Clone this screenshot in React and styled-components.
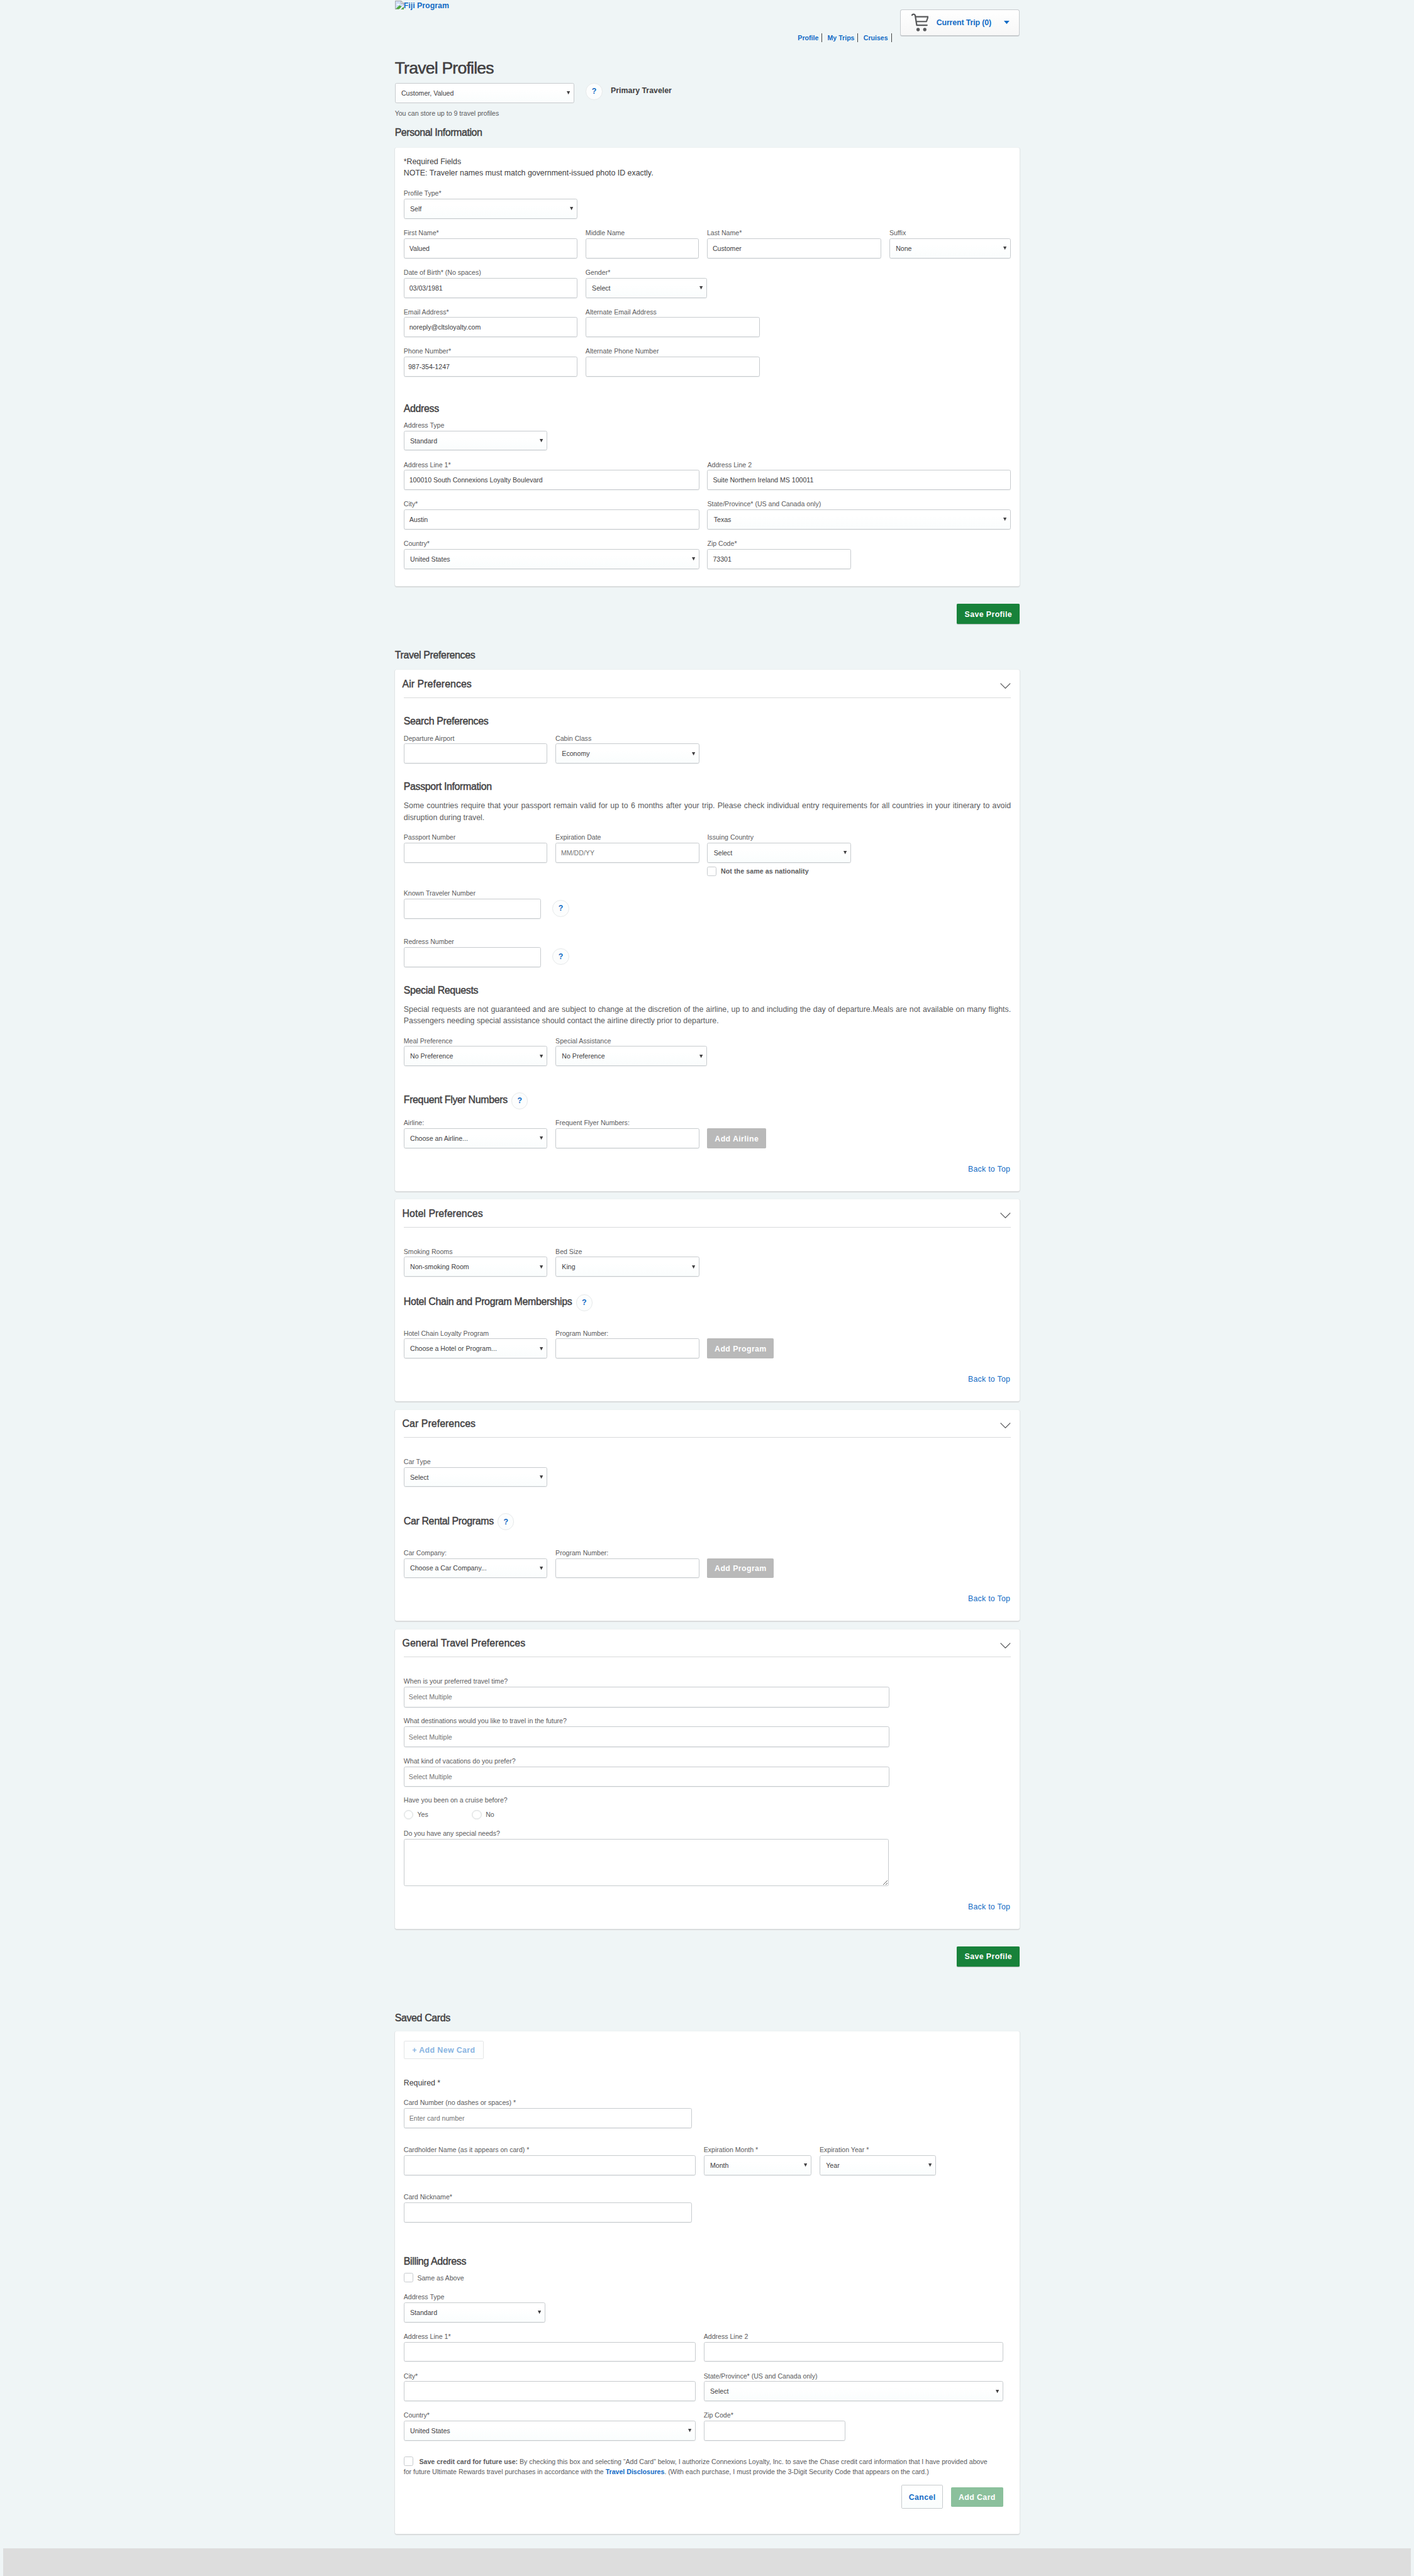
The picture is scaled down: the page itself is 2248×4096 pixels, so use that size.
import React from "react";
import styled, { createGlobalStyle } from "styled-components";

const SCALE = 0.884;
const LINK = "#126bc5";
const DARK = "#414042";
const MUTED = "#5b5b5d";
const BORDER = "#c7cbce";

const GlobalStyle = createGlobalStyle`
  html, body { margin: 0; padding: 0; background: #eff5f6; overflow-x: hidden; }
  *, *::before, *::after { box-sizing: border-box; }
  body, input, textarea, button { font-family: "Liberation Sans", Arial, sans-serif; }
`;

const Page = styled.div`
  zoom: ${SCALE};
  width: 2543px;
  height: 4634px;
  overflow: hidden;
  display: flex;
  flex-direction: column;
  align-items: center;
  background: #eff5f6;
  color: ${DARK};
  font-size: 12px;
`;

const Column = styled.main`
  width: 1124px;
  margin-left: 1px;
  padding-top: 0.6px;
  display: flex;
  flex-direction: column;
  align-items: stretch;
`;

/* ---------- header ---------- */

const Header = styled.header`
  height: 105px;
  display: flex;
  justify-content: space-between;
`;

const Logo = styled.a`
  display: flex;
  align-items: flex-start;
  height: 20px;
  color: ${LINK};
  font-size: 14px;
  font-weight: bold;
  line-height: 20px;
  white-space: nowrap;
`;

const HeaderRight = styled.div`
  display: flex;
  align-items: flex-start;
`;

const Nav = styled.nav`
  display: flex;
  margin-top: 59px;
  margin-right: 15.5px;
`;

const NavLink = styled.a`
  height: 16px;
  padding-right: 5.5px;
  margin-left: 9.5px;
  border-right: 1px solid #444;
  color: ${LINK};
  font-size: 12px;
  font-weight: bold;
  line-height: 16px;
  white-space: nowrap;
`;

const Cart = styled.div`
  width: 215px;
  height: 49.5px;
  margin-top: 16px;
  padding: 0 17px 0 19px;
  display: flex;
  align-items: center;
  border: 1px solid ${BORDER};
  border-bottom-width: 3px;
  border-right-width: 2px;
  border-radius: 4px;
  background: linear-gradient(#fff, #f7f7f7);
  color: ${LINK};
  font-size: 14px;
  font-weight: bold;
  letter-spacing: -0.15px;
  white-space: nowrap;
`;

const CartLabel = styled.span`
  flex: 1;
  margin-left: 14px;
`;

/* ---------- text ---------- */

const Title = styled.h1`
  margin: 0;
  font-size: 30px;
  font-weight: normal;
  line-height: 36px;
  letter-spacing: -0.85px;
  -webkit-text-stroke: 0.6px ${DARK};
`;

const Heading = styled.h2`
  margin: ${(p) => p.$mt || 0}px 0 0;
  font-size: 18px;
  font-weight: normal;
  line-height: 24px;
  letter-spacing: ${(p) => p.$ls ?? -0.38}px;
  -webkit-text-stroke: 0.5px ${DARK};
  white-space: nowrap;
`;

const Hint = styled.p`
  margin: 10.4px 0 0;
  color: ${MUTED};
  line-height: 16px;
`;

const Note = styled.p`
  margin: ${(p) => p.$mt || 0}px 0 0;
  font-size: 14px;
  line-height: 20px;
`;

const Paragraph = styled.p`
  margin: ${(p) => p.$mt}px 0 0;
  color: ${MUTED};
  font-size: 14px;
  line-height: 21px;
`;

const Line = styled.span`
  display: block;
  white-space: nowrap;
  text-align: ${(p) => (p.$fill ? "justify" : "left")};
  text-align-last: ${(p) => (p.$fill ? "justify" : "left")};
`;

const Strong = styled.strong`
  margin-left: 15px;
  font-size: 14px;
  line-height: 20px;
  margin-bottom: 6px;
`;

const BackLink = styled.a`
  display: block;
  margin-top: ${(p) => p.$mt}px;
  padding-top: 1px;
  padding-right: 1px;
  color: ${LINK};
  font-size: 14px;
  line-height: 20px;
  letter-spacing: 0.3px;
  text-align: right;
`;

/* ---------- panels ---------- */

const Card = styled.section`
  height: ${(p) => p.$h}px;
  margin-top: ${(p) => p.$mt}px;
  padding: ${(p) => p.$pt || 0}px 16px 0;
  border-radius: 3px;
  background: #fff;
  box-shadow: 0 2px 1px #d9dcdd, -1px 1px 1px #e1e5e6, 1px 1px 1px #e1e5e6;
`;

const CardHead = styled.div`
  height: 50px;
  padding-top: 12.5px;
  display: flex;
  justify-content: space-between;
  align-items: flex-start;
  border-bottom: 1px solid #d8dadb;
`;

const CardTitle = styled(Heading)`
  margin-left: -2.5px;
`;

const Row = styled.div`
  display: flex;
  align-items: ${(p) => p.$align || "flex-start"};
  justify-content: ${(p) => (p.$end ? "flex-end" : "flex-start")};
  gap: ${(p) => p.$gap ?? 14.5}px;
  margin-top: ${(p) => p.$mt ?? 16}px;
`;

/* ---------- form parts ---------- */

const FieldWrap = styled.div`
  width: ${(p) => p.$w}px;
  flex: none;
`;

const Label = styled.label`
  display: block;
  margin-top: ${(p) => p.$mt || 0}px;
  color: ${MUTED};
  font-size: 12px;
  line-height: 19px;
  white-space: nowrap;
`;

const Input = styled.input`
  display: block;
  width: 100%;
  height: ${(p) => p.$h || 36}px;
  margin: 0;
  padding: 0 ${(p) => p.$pad || 9}px;
  border: 1px solid ${BORDER};
  border-radius: 3px;
  background: #fff;
  box-shadow: 0 1px 0 #f0f2f3;
  color: ${DARK};
  font-size: 12px;
  outline: none;
  &::placeholder { color: #757575; opacity: 1; }
`;

const SelectBox = styled.div`
  width: ${(p) => (p.$w ? p.$w + "px" : "100%")};
  height: 36px;
  padding: 0 6.5px 0 10.5px;
  display: flex;
  align-items: center;
  justify-content: space-between;
  border: 1px solid ${BORDER};
  border-radius: 3px;
  background: linear-gradient(#fff 30%, #fafdfd);
  box-shadow: 0 1px 0 #f0f2f3;
  color: ${DARK};
  font-size: 12px;
  white-space: nowrap;
`;

const TextArea = styled.textarea`
  display: block;
  width: 873px;
  height: 85px;
  margin: 0;
  border: 1px solid ${BORDER};
  border-radius: 3px;
  background: #fff;
  resize: both;
  outline: none;
`;

const Help = styled.span`
  width: 30px;
  height: 30px;
  flex: none;
  margin-bottom: ${(p) => p.$mb || 0}px;
  display: flex;
  align-items: center;
  justify-content: center;
  border: 1px solid #e6e9ea;
  border-radius: 50%;
  background: #fcfdfd;
  color: ${LINK};
  font-size: 14px;
  font-weight: bold;
`;

const Check = styled.span`
  display: inline-block;
  flex: none;
  width: 17px;
  height: 17px;
  border: 1px solid ${BORDER};
  border-radius: ${(p) => (p.$round ? "50%" : "3px")};
  background: #fff;
  ${(p) => p.$round && "border-color: #dcdfe0; box-shadow: inset 0 0 0 1px #eef0f0;"}
`;

const CheckRow = styled.div`
  display: flex;
  align-items: center;
  gap: 7.5px;
  margin: ${(p) => p.$mt}px 0 0 ${(p) => p.$ml || 0}px;
  width: ${(p) => (p.$w ? p.$w + "px" : "auto")};
  height: ${(p) => p.$h || 17}px;
  color: ${MUTED};
  font-weight: ${(p) => (p.$bold ? "bold" : "normal")};
  letter-spacing: ${(p) => (p.$bold ? 0.1 : 0)}px;
  line-height: 17px;
  white-space: nowrap;
`;

const CheckText = styled.span`
  padding-top: 1.5px;
`;

const tones = {
  green: "background: #17823a; box-shadow: 0 1px 1px #a9b9b0;",
  grey: "background: #b9b9b9;",
  pale: "background: #8bc09c;",
  outline: `background: linear-gradient(#fff, #fafdfd); border: 1px solid ${BORDER}; color: ${LINK};`,
  faded: "background: #fdfefe; border: 1px solid #e3e5e6; color: #89b5e2;",
};

const Button = styled.button`
  width: ${(p) => p.$w}px;
  height: ${(p) => p.$h || 36}px;
  flex: none;
  display: block;
  margin: 0;
  padding: 1px 0 0;
  border: 0;
  border-radius: 2px;
  color: #fff;
  font-size: 14px;
  font-weight: bold;
  letter-spacing: 0.45px;
  white-space: nowrap;
  ${(p) => tones[p.$tone]}
`;

const Disclosure = styled.p`
  margin: 29.8px 0 0;
  color: ${MUTED};
  line-height: 18px;
  white-space: nowrap;

  ${Check} {
    margin: -1px 11px 0 0;
    vertical-align: top;
  }
  a {
    color: ${LINK};
    font-weight: bold;
  }
`;

const Footer = styled.footer`
  align-self: stretch;
  height: 49px;
  margin: 26.9px 6px 0;
  background: #ddd;
`;

/* ---------- icons ---------- */

const CartIcon = () => (
  <svg width="31" height="33" viewBox="0 0 31 33" fill="none" stroke="#58595b" strokeLinecap="round" strokeLinejoin="round">
    <path d="M1.2 3.3C2.6 1 6.2 1.2 6.9 4.6L9.6 21.6H28" strokeWidth="2.6" />
    <path d="M8 6.4H30L27 15H9.6" strokeWidth="2.4" />
    <circle cx="12" cy="29.4" r="3" fill="#58595b" stroke="none" />
    <circle cx="24" cy="29.4" r="3" fill="#58595b" stroke="none" />
  </svg>
);

const BrokenImage = () => (
  <svg width="16" height="16" viewBox="0 0 16 16">
    <path d="M.5.5H11L15.500 5V10L12 15.500H.5Z" fill="#cfdcf5" stroke="#9a9a9a" />
    <path d="M11 .5V5H15.500Z" fill="#fff" stroke="#9a9a9a" />
    <path d="M3 7.500C3 5.500 6 4.500 6.500 6C8.500 5.500 8.500 7.500 7.500 7.500Z" fill="#fff" />
    <path d="M1 15L8 8.500L12 10.500L8 15Z" fill="#4fa83c" />
    <path d="M16 10.500V16H11Z" fill="#4fa83c" />
    <path d="M7.500 16.500L16.500 8.500" stroke="#fff" strokeWidth="1.500" />
  </svg>
);

const Arrow = () => (
  <svg width="6" height="6" viewBox="0 0 6 6">
    <path d="M0 0H6L3 6Z" fill={DARK} />
  </svg>
);

const CartArrow = () => (
  <svg width="10" height="6" viewBox="0 0 10 6">
    <path d="M0 0H10L5 6Z" fill={LINK} />
  </svg>
);

const Chevron = styled(({ className }) => (
  <svg className={className} width="19" height="11" viewBox="0 0 19 11" fill="none">
    <path d="M0.700 0.700L9.500 9.500L18.300 0.700" stroke="#58595b" strokeWidth="1.500" />
  </svg>
))`
  margin-top: 10.5px;
`;

/* ---------- composed parts ---------- */

const Field = ({ label, w, value, ph, h, pad }) => (
  <FieldWrap $w={w}>
    <Label>{label}</Label>
    <Input $h={h} $pad={pad} defaultValue={value} placeholder={ph} />
  </FieldWrap>
);

const Select = ({ label, w, value }) => (
  <FieldWrap $w={w}>
    <Label>{label}</Label>
    <SelectBox>
      {value}
      <Arrow />
    </SelectBox>
  </FieldWrap>
);

const Head = ({ children }) => (
  <CardHead>
    <CardTitle $ls={0.05}>{children}</CardTitle>
    <Chevron />
  </CardHead>
);

const HelpHeading = ({ mt, children }) => (
  <Row $mt={mt} $gap={7}>
    <Heading $mt={1.3}>{children}</Heading>
    <Help>?</Help>
  </Row>
);

export default function App() {
  return (
    <>
      <GlobalStyle />
      <Page>
        <Column>
          <Header>
            <Logo>
              <BrokenImage />
              Fiji Program
            </Logo>
            <HeaderRight>
              <Nav>
                <NavLink>Profile</NavLink>
                <NavLink>My Trips</NavLink>
                <NavLink>Cruises</NavLink>
              </Nav>
              <Cart>
                <CartIcon />
                <CartLabel>Current Trip (0)</CartLabel>
                <CartArrow />
              </Cart>
            </HeaderRight>
          </Header>

          <Title>Travel Profiles</Title>
          <Row $mt={7.4} $gap={0} $align="center">
            <SelectBox $w={323}>
              Customer, Valued
              <Arrow />
            </SelectBox>
            <CheckRow $mt={0} $ml={20.500} $h={36}>
              <Help $mb={5}>?</Help>
            </CheckRow>
            <Strong>Primary Traveler</Strong>
          </Row>
          <Hint>You can store up to 9 travel profiles</Hint>
          <Heading $mt={15} $ls={-0.45}>Personal Information</Heading>

          <Card $mt={15} $h={789} $pt={16.5}>
            <Note>
              *Required Fields
              <br />
              NOTE: Traveler names must match government-issued photo ID exactly.
            </Note>
            <Row $mt={16.9}>
              <Select label="Profile Type*" w={312.5} value="Self" />
            </Row>
            <Row>
              <Field label="First Name*" w={312.5} value="Valued" />
              <Field label="Middle Name" w={204} />
              <Field label="Last Name*" w={313.5} value="Customer" />
              <Select label="Suffix" w={218} value="None" />
            </Row>
            <Row>
              <Field label="Date of Birth* (No spaces)" w={312.5} value="03/03/1981" />
              <Select label="Gender*" w={218} value="Select" />
            </Row>
            <Row>
              <Field label="Email Address*" w={312.5} value="noreply@cltsloyalty.com" />
              <Field label="Alternate Email Address" w={313.5} />
            </Row>
            <Row>
              <Field label="Phone Number*" w={312.5} value="987-354-1247" pad={7} />
              <Field label="Alternate Phone Number" w={313.5} />
            </Row>
            <Heading $mt={44.8}>Address</Heading>
            <Row $mt={9}>
              <Select label="Address Type" w={258.5} value="Standard" />
            </Row>
            <Row>
              <Field label="Address Line 1*" w={531.5} value="100010 South Connexions Loyalty Boulevard" />
              <Field label="Address Line 2" w={546} value="Suite Northern Ireland MS 100011" />
            </Row>
            <Row>
              <Field label="City*" w={531.5} value="Austin" />
              <Select label="State/Province* (US and Canada only)" w={546} value="Texas" />
            </Row>
            <Row>
              <Select label="Country*" w={531.5} value="United States" />
              <Field label="Zip Code*" w={259} value="73301" />
            </Row>
          </Card>

          <Row $mt={32} $end>
            <Button $w={113} $tone="green">Save Profile</Button>
          </Row>
          <Heading $mt={43.8}>Travel Preferences</Heading>

          <Card $mt={15.2} $h={937}>
            <Head>Air Preferences</Head>
            <Heading $mt={30}>Search Preferences</Heading>
            <Row $mt={9.4}>
              <Field label="Departure Airport" w={258.5} />
              <Select label="Cabin Class" w={258.5} value="Economy" />
            </Row>
            <Heading $mt={28.6}>Passport Information</Heading>
            <Paragraph $mt={13.1}>
              <Line $fill>
                Some countries require that your passport remain valid for up to 6 months after your trip. Please check individual entry requirements for all countries in your itinerary to avoid
              </Line>
              <Line>disruption during travel.</Line>
            </Paragraph>
            <Row $mt={15.2}>
              <Field label="Passport Number" w={258.5} />
              <Field label="Expiration Date" w={258.5} ph="MM/DD/YY" />
              <Select label="Issuing Country" w={258.5} value="Select" />
            </Row>
            <CheckRow $mt={7} $ml={546} $bold>
              <Check />
              <CheckText>Not the same as nationality</CheckText>
            </CheckRow>
            <Row $mt={22.3} $gap={20.5} $align="flex-end">
              <Field label="Known Traveler Number" w={247} />
              <Help $mb={4}>?</Help>
            </Row>
            <Row $mt={32} $gap={20.5} $align="flex-end">
              <Field label="Redress Number" w={247} />
              <Help $mb={4}>?</Help>
            </Row>
            <Heading $mt={29}>Special Requests</Heading>
            <Paragraph $mt={12.6}>
              <Line $fill>
                Special requests are not guaranteed and are subject to change at the discretion of the airline, up to and including the day of departure.Meals are not available on many flights.
              </Line>
              <Line>Passengers needing special assistance should contact the airline directly prior to departure.</Line>
            </Paragraph>
            <Row $mt={15.3}>
              <Select label="Meal Preference" w={258.5} value="No Preference" />
              <Select label="Special Assistance" w={273} value="No Preference" />
            </Row>
            <HelpHeading mt={47.6}>Frequent Flyer Numbers</HelpHeading>
            <Row $mt={15.5} $align="flex-end">
              <Select label="Airline:" w={258.5} value="Choose an Airline..." />
              <Field label="Frequent Flyer Numbers:" w={258.5} />
              <Button $w={106} $tone="grey">Add Airline</Button>
            </Row>
            <BackLink $mt={27.6}>Back to Top</BackLink>
          </Card>

          <Card $mt={15.5} $h={362.5}>
            <Head>Hotel Preferences</Head>
            <Row $mt={34}>
              <Select label="Smoking Rooms" w={258.5} value="Non-smoking Room" />
              <Select label="Bed Size" w={258.5} value="King" />
            </Row>
            <HelpHeading mt={31.5}>Hotel Chain and Program Memberships</HelpHeading>
            <Row $mt={30.5} $align="flex-end">
              <Select label="Hotel Chain Loyalty Program" w={258.5} value="Choose a Hotel or Program..." />
              <Field label="Program Number:" w={258.5} />
              <Button $w={120} $tone="grey">Add Program</Button>
            </Row>
            <BackLink $mt={27.4}>Back to Top</BackLink>
          </Card>

          <Card $mt={16} $h={379}>
            <Head>Car Preferences</Head>
            <Row $mt={33.5}>
              <Select label="Car Type" w={258.5} value="Select" />
            </Row>
            <HelpHeading mt={47.5}>Car Rental Programs</HelpHeading>
            <Row $mt={31.5} $align="flex-end">
              <Select label="Car Company:" w={258.5} value="Choose a Car Company..." />
              <Field label="Program Number:" w={258.5} />
              <Button $w={120} $tone="grey">Add Program</Button>
            </Row>
            <BackLink $mt={27.4}>Back to Top</BackLink>
          </Card>

          <Card $mt={16} $h={538}>
            <Head>General Travel Preferences</Head>
            <Row $mt={33.5}>
              <Field label="When is your preferred travel time?" w={874} h={37} pad={8} ph="Select Multiple" />
            </Row>
            <Row $mt={15.7}>
              <Field label="What destinations would you like to travel in the future?" w={874} h={37} pad={8} ph="Select Multiple" />
            </Row>
            <Row $mt={15.7}>
              <Field label="What kind of vacations do you prefer?" w={874} h={37} pad={8} ph="Select Multiple" />
            </Row>
            <Label $mt={14.6}>Have you been on a cruise before?</Label>
            <Row $mt={7.6} $gap={0}>
              <CheckRow $mt={0} $w={123} $h={18}>
                <Check $round />
                Yes
              </CheckRow>
              <CheckRow $mt={0} $h={18}>
                <Check $round />
                No
              </CheckRow>
            </Row>
            <Label $mt={15.5}>Do you have any special needs?</Label>
            <TextArea />
            <BackLink $mt={27.5}>Back to Top</BackLink>
          </Card>

          <Row $mt={32} $end>
            <Button $w={113} $tone="green">Save Profile</Button>
          </Row>
          <Heading $mt={80.3}>Saved Cards</Heading>

          <Card $mt={12.7} $h={903} $pt={16.4}>
            <Button $w={144} $h={33.5} $tone="faded">+ Add New Card</Button>
            <Note $mt={33}>Required *</Note>
            <Row $mt={15.5}>
              <Field label="Card Number (no dashes or spaces) *" w={518} ph="Enter card number" />
            </Row>
            <Row $mt={30}>
              <Field label="Cardholder Name (as it appears on card) *" w={525} />
              <Select label="Expiration Month *" w={194} value="Month" />
              <Select label="Expiration Year *" w={209} value="Year" />
            </Row>
            <Row $mt={30}>
              <Field label="Card Nickname*" w={518} />
            </Row>
            <Heading $mt={58.4}>Billing Address</Heading>
            <CheckRow $mt={8.2}>
              <Check />
              <CheckText>Same as Above</CheckText>
            </CheckRow>
            <Row $mt={17.2}>
              <Select label="Address Type" w={255} value="Standard" />
            </Row>
            <Row>
              <Field label="Address Line 1*" w={525} />
              <Field label="Address Line 2" w={539} />
            </Row>
            <Row>
              <Field label="City*" w={525} />
              <Select label="State/Province* (US and Canada only)" w={539} value="Select" />
            </Row>
            <Row>
              <Select label="Country*" w={525} value="United States" />
              <Field label="Zip Code*" w={254.5} />
            </Row>
            <Disclosure>
              <Check />
              <b>Save credit card for future use:</b> By checking this box and selecting “Add Card” below, I authorize Connexions Loyalty, Inc. to save the Chase credit card information that I have provided above
              <br />
              for future Ultimate Rewards travel purchases in accordance with the <a>Travel Disclosures</a>. (With each purchase, I must provide the 3-Digit Security Code that appears on the card.)
            </Disclosure>
            <Row $mt={14} $end $align="center">
              <Button $w={75} $h={43} $tone="outline">Cancel</Button>
              <FieldWrap $w={107.5}>
                <Button $w={93.5} $tone="pale">Add Card</Button>
              </FieldWrap>
            </Row>
          </Card>
        </Column>
        <Footer />
      </Page>
    </>
  );
}
